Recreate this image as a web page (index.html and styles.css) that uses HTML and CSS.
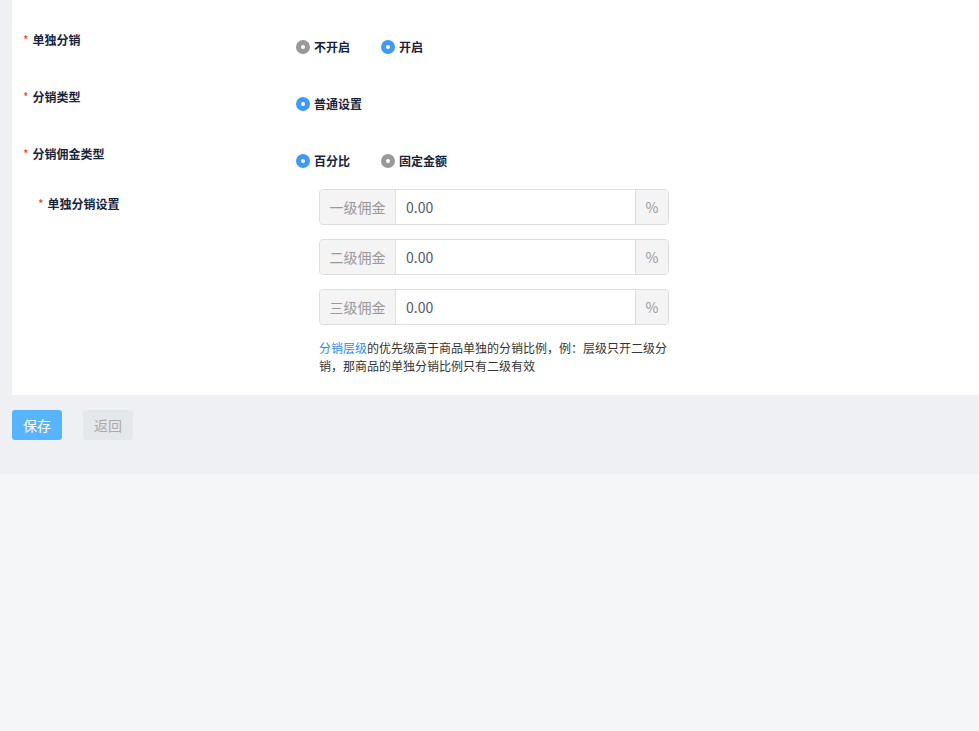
FILE: index.html
```html
<!DOCTYPE html>
<html lang="zh-CN">
<head>
  <meta charset="UTF-8">
  <meta name="viewport" content="width=device-width, initial-scale=1.0">
  <title>分销设置</title>
  <link rel="stylesheet" href="styles.css">
</head>
<body>
  <div class="page">
    <div class="panel">
      <div class="form-item">
        <label class="form-label"><span class="req">*</span>单独分销</label>
        <div class="form-content radios">
          <span class="radio"><span class="dot"></span>不开启</span>
          <span class="radio checked"><span class="dot"></span>开启</span>
        </div>
      </div>

      <div class="form-item">
        <label class="form-label"><span class="req">*</span>分销类型</label>
        <div class="form-content radios">
          <span class="radio checked"><span class="dot"></span>普通设置</span>
        </div>
      </div>

      <div class="form-item">
        <label class="form-label"><span class="req">*</span>分销佣金类型</label>
        <div class="form-content radios">
          <span class="radio checked"><span class="dot"></span>百分比</span>
          <span class="radio"><span class="dot"></span>固定金额</span>
        </div>
      </div>

      <div class="form-item nested">
        <label class="form-label"><span class="req">*</span>单独分销设置</label>
        <div class="form-content">
          <div class="input-group">
            <span class="prepend">一级佣金</span>
            <input class="input" type="text" value="0.00">
            <span class="append">%</span>
          </div>
          <div class="input-group">
            <span class="prepend">二级佣金</span>
            <input class="input" type="text" value="0.00">
            <span class="append">%</span>
          </div>
          <div class="input-group">
            <span class="prepend">三级佣金</span>
            <input class="input" type="text" value="0.00">
            <span class="append">%</span>
          </div>
          <p class="help"><a href="#" class="link">分销层级</a>的优先级高于商品单独的分销比例，例：层级只开二级分销，那商品的单独分销比例只有二级有效</p>
        </div>
      </div>
    </div>

    <div class="footer">
      <button class="btn primary">保存</button>
      <button class="btn disabled">返回</button>
    </div>
  </div>
</body>
</html>
```

FILE: styles.css
```css
html, body {
  margin: 0;
  padding: 0;
}

body {
  background-color: #f5f6f8;
  font-family: "Microsoft YaHei", "Noto Sans CJK SC", "Liberation Sans", sans-serif;
  color: #17233d;
  font-size: 12px;
}

.page {
  background-color: #eef0f3;
  padding-left: 12px;
}

.panel {
  background-color: #ffffff;
  padding: 28px 0 20px 11px;
}

.form-item {
  display: flex;
  align-items: flex-start;
  height: 47px;
  margin-bottom: 10px;
}

.form-item.nested {
  height: auto;
  margin: -10px 0 0 15px;
}

.form-label {
  width: 273px;
  flex-shrink: 0;
  font-weight: bold;
  line-height: 24px;
  color: #17233d;
}

.nested .form-label {
  width: 281px;
  padding-top: 3px;
}

.req {
  color: #ed4014;
  font-weight: normal;
  margin-right: 4px;
}

.radios {
  display: flex;
  gap: 31px;
  padding-top: 7px;
  line-height: 24px;
}

.radio {
  display: flex;
  align-items: center;
  font-weight: bold;
  color: #17233d;
}

.dot {
  width: 14px;
  height: 14px;
  box-sizing: border-box;
  border-radius: 50%;
  border: 5px solid #999999;
  background-color: #ffffff;
  margin-right: 4px;
}

.radio.checked .dot {
  border-color: #3f9af6;
}

.input-group {
  display: flex;
  width: 350px;
  height: 36px;
  box-sizing: border-box;
  border: 1px solid #dcdee2;
  border-radius: 4px;
  margin-bottom: 14px;
  font-size: 14px;
  overflow: hidden;
}

.prepend,
.append {
  display: flex;
  align-items: center;
  justify-content: center;
  background-color: #f4f4f5;
  color: #999999;
}

.prepend {
  width: 75px;
  border-right: 1px solid #dcdee2;
}

.append {
  width: 32px;
  border-left: 1px solid #dcdee2;
}

.input {
  flex: 1;
  min-width: 0;
  border: none;
  outline: none;
  padding: 0 10px;
  font-size: 14px;
  font-family: inherit;
  color: #515a6e;
}

.help {
  margin: 0;
  width: 350px;
  line-height: 18px;
  color: #333333;
}

.link {
  color: #2d8cf0;
  text-decoration: none;
}

.footer {
  display: flex;
  gap: 21px;
  padding: 15px 0 34px;
}

.btn {
  width: 50px;
  height: 30px;
  border: none;
  border-radius: 3px;
  font-size: 14px;
  font-family: inherit;
  cursor: pointer;
}

.btn.primary {
  background-color: #57b4ff;
  color: #ffffff;
}

.btn.disabled {
  background-color: #e4e8eb;
  color: #aaaaaa;
  cursor: default;
}
```
